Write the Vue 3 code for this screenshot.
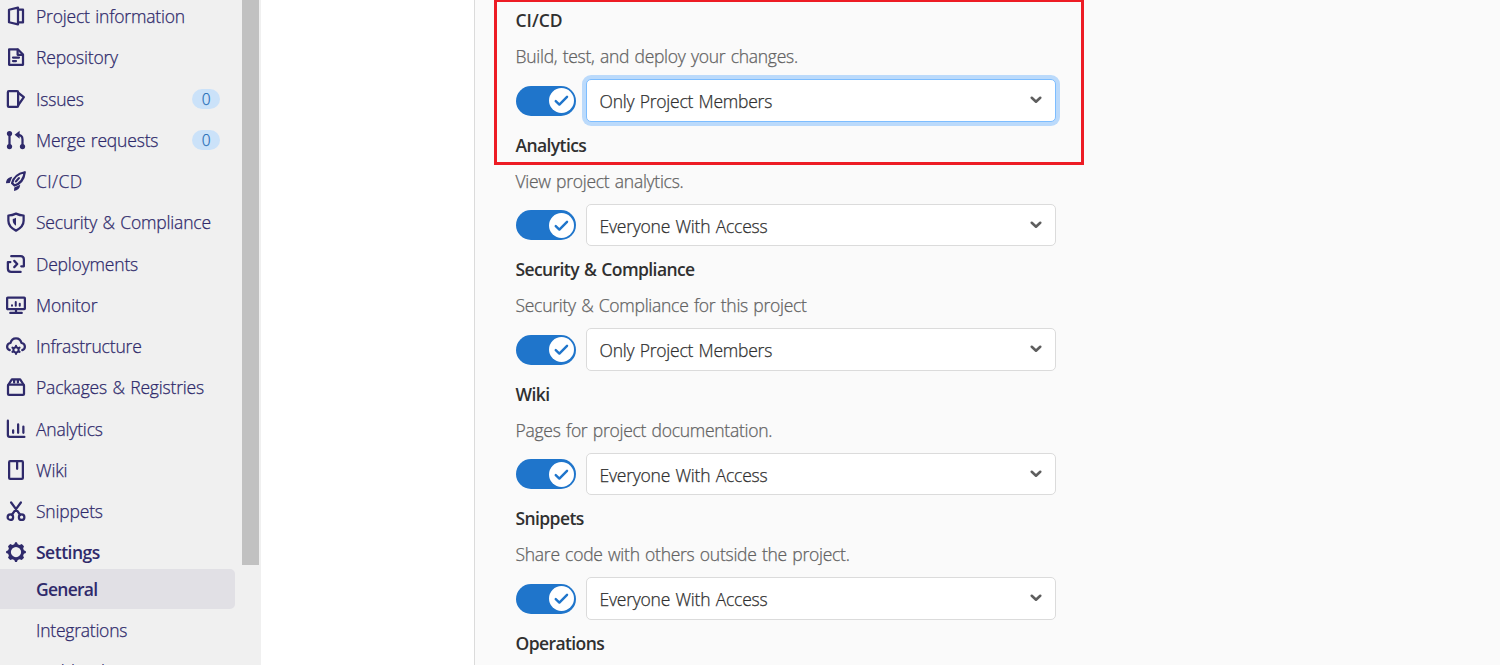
<script setup>
const nav = [
  { label: 'Project information', icon: 'project' },
  { label: 'Repository', icon: 'doc' },
  { label: 'Issues', icon: 'issues', count: 0 },
  { label: 'Merge requests', icon: 'merge', count: 0 },
  { label: 'CI/CD', icon: 'rocket', wide: true },
  { label: 'Security & Compliance', icon: 'shield' },
  { label: 'Deployments', icon: 'deploy' },
  { label: 'Monitor', icon: 'monitor' },
  { label: 'Infrastructure', icon: 'cloud' },
  { label: 'Packages & Registries', icon: 'package' },
  { label: 'Analytics', icon: 'chart' },
  { label: 'Wiki', icon: 'book' },
  { label: 'Snippets', icon: 'scissors' },
  { label: 'Settings', icon: 'gear', active: true },
]
const icons = {
  project: '<path d="M2.400 3 9.600 1.300v13.400L2.400 13z"/><path d="M9.800 2.900h3.800v10.200H9.800"/>',
  doc: '<path d="M2.500 1.800h6.900l4.200 4.200v8.200H2.500z"/><path d="M9.300 2v4.200h4M5.600 8.400h4.800M5.600 11.200h2.400"/>',
  issues: '<rect x="1.500" y="1.700" width="8.200" height="12.600" rx=".8"/><path d="M10 3.200l4.300 3.300L10 12.600"/>',
  merge: '<path d="M2.800 3v10M13.200 13V7.500c0-2.400-1.600-3.700-4-3.700"/><g class="solid"><path d="M10.900.6v6.400L6.900 3.800z"/><circle cx="2.800" cy="2.800" r="2.100"/><circle cx="2.800" cy="13.200" r="2.100"/><circle cx="13.200" cy="13.200" r="2.100"/></g>',
  rocket: '<path d="M4.900 9.700C6 5.300 9.400 2.100 15 1 14.300 6.600 11 10.300 6.800 11.600zM8 8.300l2.300-2.600"/><path class="solid" d="M5 4.600C2 4.900.1 6.800 0 9.700l3-.1zM11.400 11c-.2 2.800-2 4.600-5 5l.2-2.800z"/>',
  shield: '<path d="M8 1.300c2 .9 4 1.400 6.100 1.500V7c0 3.700-2.400 6-6.100 7.900C4.300 13 1.900 10.700 1.900 7V2.800C4 2.700 6 2.200 8 1.300z"/><path class="solid" d="M8 4.600v6.400C6.500 10 5.400 8.600 5.400 7V5.500C6.300 5.400 7.200 5.100 8 4.600z"/>',
  deploy: '<path d="M1.500 6.400V11.600q0 2.700 2.700 2.700h7.500M4.200 1.700h7.400q2.700 0 2.700 2.700v5.400h-2.100M1.500 6.400h2"/><path d="M6.600 5.500 9 8l-2.400 2.500"/>',
  monitor: '<rect x=".9" y="2" width="14.200" height="9.300" rx=".5"/><path d="M8 11.500v2.700M3.400 14.300h9.200"/><path class="mid" d="M4.800 8.500v-.3M7.800 8.500V5.500M11 8.500V7"/>',
  cloud: '<path d="M3 11.300C1.700 10.900.9 10 .9 8.600c0-1.700 1.200-2.800 2.700-3C4.100 3.300 5.700 1.800 8 1.800s3.900 1.500 4.400 3.800c1.500.2 2.700 1.300 2.700 3 0 1.400-.8 2.300-2.100 2.700"/><circle class="mid" cx="8" cy="11" r="2.100"/><path class="mid" d="M8 7.700v.7M8 13.600v.7M5.100 9.300l.7.4M10.200 12.300l.7.4M5.100 12.700l.7-.4M10.200 9.700l.7-.4"/>',
  package: '<rect x="1.600" y="6" width="12.800" height="8.300" rx=".8"/><path d="M2 6 4.700 1.900h6.600L14 6M6.500 2.300v2M9.500 2.300v2"/>',
  chart: '<path d="M1.500 1.300v11.500q0 1.500 1.500 1.500h11.700M5.700 11V9M9.700 11V4.300M13.900 11V6"/>',
  book: '<rect x="2.500" y=".9" width="11" height="14.200" rx=".8"/><path d="M8.900 1.200V7"/>',
  scissors: '<circle cx="3.500" cy="12.900" r="2.200"/><circle cx="12.500" cy="12.900" r="2.200"/><path d="M4.100 1.200 11.300 11M11.900 1.200 4.700 11"/>',
  gear: '<path class="solid" fill-rule="evenodd" d="M6.600 1.700 7.300.1h1.400l.7 1.600 1.500.6 1.700-.7 1.800 1.800-.7 1.700.6 1.500 1.600.7v1.400l-1.600.7-.6 1.500.7 1.700-1.800 1.800-1.700-.7-1.500.6-.7 1.600H7.300l-.7-1.600-1.500-.6-1.700.7-1.800-1.800.7-1.700-.6-1.500L.1 8.700V7.300l1.600-.7.6-1.500-.7-1.700 1.800-1.800 1.700.7zM8 3.900a4.100 4.100 0 1 0 0 8.200 4.100 4.100 0 0 0 0-8.200z"/>',
}
const sub = [{ label: 'General', active: true }, { label: 'Integrations' }, { label: 'Webhooks' }]
const features = [
  { name: 'CI/CD', help: 'Build, test, and deploy your changes.', value: 'Only Project Members', focus: true, wide: true },
  { name: 'Analytics', help: 'View project analytics.', value: 'Everyone With Access' },
  { name: 'Security & Compliance', help: 'Security & Compliance for this project', value: 'Only Project Members' },
  { name: 'Wiki', help: 'Pages for project documentation.', value: 'Everyone With Access' },
  { name: 'Snippets', help: 'Share code with others outside the project.', value: 'Everyone With Access' },
  { name: 'Operations' },
]
</script>

<template>
  <div class="page">
    <aside class="sidebar">
      <nav class="nav">
        <a v-for="n in nav" :key="n.label" class="item" :class="{ strong: n.active }">
          <svg class="icon" viewBox="0 0 16 16" v-html="icons[n.icon]"></svg>
          <span class="label" :class="{ wide: n.wide }">{{ n.label }}</span>
          <span v-if="n.count !== undefined" class="badge">{{ n.count }}</span>
        </a>
        <div class="subnav">
          <a v-for="s in sub" :key="s.label" class="subitem" :class="{ current: s.active }">{{ s.label }}</a>
        </div>
      </nav>
      <div class="track"><div class="thumb"></div></div>
    </aside>
    <main class="main">
      <section class="panel">
        <div v-for="f in features" :key="f.name" class="feature">
          <h3 :class="{ wide: f.wide }">{{ f.name }}</h3>
          <template v-if="f.help">
            <p>{{ f.help }}</p>
            <div class="controls">
              <span class="toggle">
                <span class="knob"><svg viewBox="0 0 16 16"><path d="M2.600 8.600 6 11.800 13.200 4.600" /></svg></span>
              </span>
              <div class="select" :class="{ focus: f.focus }">
                <span>{{ f.value }}</span>
                <svg viewBox="0 0 10 7"><path d="M1.300 1.500 5 5l3.700-3.500" /></svg>
              </div>
            </div>
          </template>
        </div>
        <div class="highlight"></div>
      </section>
    </main>
  </div>
</template>

<style>
body { margin: 0; overflow: hidden; }
</style>

<style scoped>
.page { display: flex; width: 1500px; height: 665px; overflow: hidden; background: #fff; font-family: "Open Sans", "Noto Sans", sans-serif; font-size: 17.5px; font-weight: 300; letter-spacing: -0.23px; word-spacing: 1.1px; -webkit-text-stroke: 0.25px currentColor; }
.sidebar { display: flex; width: 261px; background: #f0f0f0; flex: none; }
.nav { width: 242px; margin-top: -4.4px; flex: none; height: 670px; overflow: hidden; color: #2f2a6b; }
.item { display: flex; align-items: center; height: 41.24px; padding: 0 22px 0 6px; letter-spacing: -0.18px; }
.icon { width: 20px; height: 20px; margin-right: 10px; flex: none; fill: none; stroke: #2f2a6b; stroke-width: 1.8; stroke-linecap: round; stroke-linejoin: round; }
.icon :deep(.solid) { fill: #2f2a6b; stroke: none; }
.icon :deep(.mid) { stroke-width: 1.6; }
.label { flex: 1; white-space: nowrap; }
.strong, .current { font-weight: 600; letter-spacing: -0.5px; -webkit-text-stroke: 0; }
.badge { width: 28px; height: 20px; line-height: 20px; border-radius: 10px; background: #cbe2f9; color: #1f6bb5; font-size: 15.5px; text-align: center; }
.subnav { margin-top: -3.9px; }
.subitem { display: block; height: 40px; line-height: 41px; margin-bottom: 1.25px; padding-left: 36px; width: 199px; border-radius: 0 5px 5px 0; }
.subitem:last-child { line-height: 38px; }
.current { background: #e1e0e5; letter-spacing: -0.75px; }
.track { width: 17px; }
.thumb { height: 565px; background: #c1c1c1; }
.main { flex: 1; padding-left: 213px; }
.panel { position: relative; height: 665px; border-left: 1px solid #dbdbdb; background: #fafafa; padding: 8px 0 0 40.5px; box-sizing: border-box; }
.feature { height: 124.5px; }
h3 { margin: 0; font-size: 17.5px; font-weight: 600; line-height: 25px; color: #303030; letter-spacing: -0.6px; -webkit-text-stroke: 0; }
.label.wide { letter-spacing: 0.4px; }
h3.wide { letter-spacing: 0; }
p { margin: 11px 0 10px; line-height: 25px; color: #626262; letter-spacing: -0.27px; }
.controls { display: flex; align-items: center; gap: 10px; }
.toggle { width: 60px; height: 30px; border-radius: 15px; background: #1f75cb; display: flex; align-items: center; justify-content: flex-end; padding-right: 2.5px; box-sizing: border-box; margin: 1px 0 0 0.5px; }
.knob { width: 25px; height: 25px; border-radius: 50%; background: #fff; display: flex; align-items: center; justify-content: center; }
.knob svg { width: 17px; height: 17px; fill: none; stroke: #1f75cb; stroke-width: 2.3; stroke-linecap: round; stroke-linejoin: round; }
.select { width: 470px; height: 42.5px; box-sizing: border-box; border: 1px solid #dbdbdb; border-radius: 5px; background: #fff; color: #303030; display: flex; align-items: center; justify-content: space-between; padding: 2px 14px 0 12.5px; }
.select svg { width: 12px; height: 8px; margin: -2.5px -1px 0 0; fill: none; stroke: #5e5e5e; stroke-width: 2.2; stroke-linecap: round; stroke-linejoin: round; }
.focus { border-color: #7dbdff; box-shadow: 0 0 0 4px #bbdafb; }
.highlight { position: absolute; left: 19px; top: -1px; width: 590px; height: 166px; box-sizing: border-box; border: 3px solid #ed1c24; }
</style>
